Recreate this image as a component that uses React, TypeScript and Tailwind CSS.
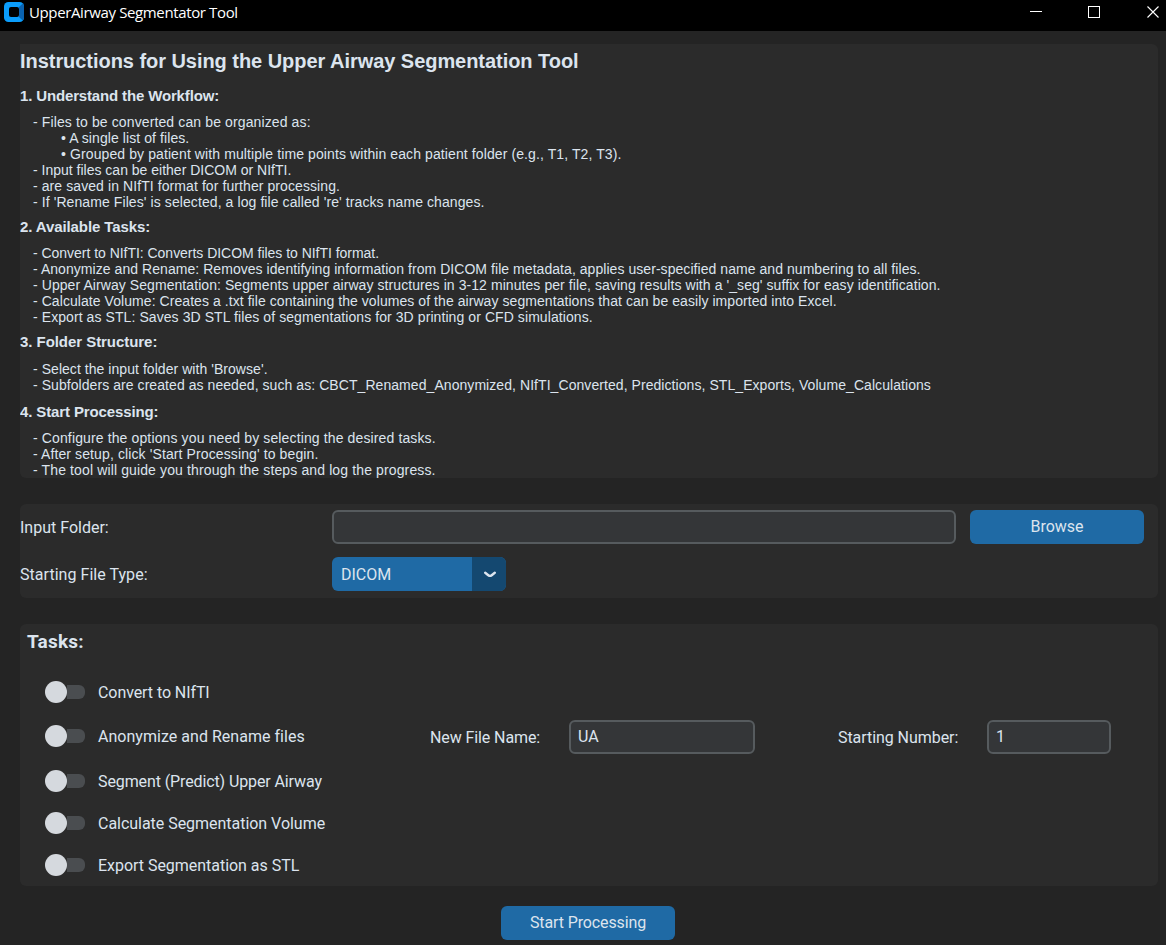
import React from "react";

type Line = { text: string; cls: string };
type Section = { title: string; titleCls: string; lines: Line[] };

const sections: Section[] = [
  {
    title: "1. Understand the Workflow:",
    titleCls: "h-[35px] pb-0.5 tracking-[-0.15px]",
    lines: [
      { text: "- Files to be converted can be organized as:", cls: "tracking-[0.12px]" },
      { text: "• A single list of files.", cls: "pl-7 tracking-[0.08px]" },
      { text: "• Grouped by patient with multiple time points within each patient folder (e.g., T1, T2, T3).", cls: "pl-7 tracking-[0.1px]" },
      { text: "- Input files can be either DICOM or NIfTI.", cls: "" },
      { text: "- are saved in NIfTI format for further processing.", cls: "tracking-[0.085px]" },
      { text: "- If 'Rename Files' is selected, a log file called 're' tracks name changes.", cls: "tracking-[0.087px]" },
    ],
  },
  {
    title: "2. Available Tasks:",
    titleCls: "h-[35px] pb-0.5 tracking-[-0.1px]",
    lines: [
      { text: "- Convert to NIfTI: Converts DICOM files to NIfTI format.", cls: "tracking-[-0.03px]" },
      { text: "- Anonymize and Rename: Removes identifying information from DICOM file metadata, applies user-specified name and numbering to all files.", cls: "tracking-[0.054px]" },
      { text: "- Upper Airway Segmentation: Segments upper airway structures in 3-12 minutes per file, saving results with a '_seg' suffix for easy identification.", cls: "tracking-[0.072px]" },
      { text: "- Calculate Volume: Creates a .txt file containing the volumes of the airway segmentations that can be easily imported into Excel.", cls: "tracking-[0.064px]" },
      { text: "- Export as STL: Saves 3D STL files of segmentations for 3D printing or CFD simulations.", cls: "tracking-[0.08px]" },
    ],
  },
  {
    title: "3. Folder Structure:",
    titleCls: "h-9 pb-0.5 tracking-[-0.05px]",
    lines: [
      { text: "- Select the input folder with 'Browse'.", cls: "tracking-[0.05px]" },
      { text: "- Subfolders are created as needed, such as: CBCT_Renamed_Anonymized, NIfTI_Converted, Predictions, STL_Exports, Volume_Calculations", cls: "tracking-[0.064px]" },
    ],
  },
  {
    title: "4. Start Processing:",
    titleCls: "h-[37px] tracking-[-0.12px]",
    lines: [
      { text: "- Configure the options you need by selecting the desired tasks.", cls: "tracking-[0.128px]" },
      { text: "- After setup, click 'Start Processing' to begin.", cls: "tracking-[0.11px]" },
      { text: "- The tool will guide you through the steps and log the progress.", cls: "tracking-[0.127px]" },
    ],
  },
];

function TitleBar() {
  return (
    <header className="flex h-[31px] shrink-0 items-start justify-between bg-black text-white">
      <div className="flex items-start gap-[5px] pl-1 pt-[2px]">
        <svg width="20" height="20" viewBox="0 0 20 20">
          <rect width="20" height="20" rx="4.500" fill="#0b9dfb" />
          <path d="M15 5L18.800 1.500Q20 2.800 20 4.500V15.500Q20 17.200 18.800 18.500L15 15Z" fill="#0a62b0" />
          <rect x="5" y="5" width="10" height="10" rx="2" fill="#000" />
        </svg>
        <span className="font-['Open_Sans','Noto_Sans',sans-serif] text-[15px] leading-5 tracking-[-0.37px]">
          UpperAirway Segmentator Tool
        </span>
      </div>
      <svg width="136" height="31" viewBox="0 0 136 31" fill="none" stroke="#fff">
        <path d="M0 11.500H12" />
        <rect x="58.500" y="6.500" width="11" height="11" />
        <path d="M117.500 6.500L128.500 17.500M128.500 6.500L117.500 17.500" strokeWidth="1.100" />
      </svg>
    </header>
  );
}

function Switch({ label, cls, textCls }: { label: string; cls: string; textCls: string }) {
  return (
    <div className={`flex items-center ${cls}`}>
      <span className="flex h-[22px] w-10 items-center">
        <span className="size-[22px] shrink-0 rounded-full bg-[#d5d9de]" />
        <span className="-ml-[11px] h-3.5 w-[29px] rounded-r-[6px] bg-[#4a4d50] [clip-path:inset(0_0_0_11px)]" />
      </span>
      <span className={`ml-[13px] whitespace-nowrap pt-0.5 ${textCls}`}>{label}</span>
    </div>
  );
}

export default function App() {
  return (
    <div className="flex h-[945px] w-[1166px] flex-col overflow-hidden bg-[#242424] font-['Roboto',sans-serif] text-base leading-5 text-[#dce4ee]">
      <TitleBar />
      <main className="flex flex-col pl-5 pr-2 pt-[13px]">
        <section className="h-[434px] overflow-hidden whitespace-nowrap rounded-md rounded-tl-none bg-[#2b2b2b] font-['Liberation_Sans',sans-serif] text-[14px] leading-4">
          <h1 className="flex h-[35px] items-center pb-0.5 text-[20px] font-bold tracking-[-0.045px]">
            Instructions for Using the Upper Airway Segmentation Tool
          </h1>
          {sections.map((s) => (
            <div key={s.title}>
              <h2 className={`flex items-center text-[15px] font-bold ${s.titleCls}`}>{s.title}</h2>
              <ul className="pl-[13px]">
                {s.lines.map((l) => (
                  <li key={l.text} className={l.cls}>
                    {l.text}
                  </li>
                ))}
              </ul>
            </div>
          ))}
        </section>

        <section className="mt-[26px] flex h-[94px] flex-col gap-[13px] rounded-md bg-[#2b2b2b] pt-1.5">
          <div className="flex h-[34px] items-center">
            <label className="w-[312px] pt-0.5">Input Folder:</label>
            <div className="h-[34px] w-[624px] rounded-md border-2 border-[#565b5e] bg-[#343638]" />
            <button className="ml-3.5 h-[34px] w-[174px] rounded-md bg-[#1f6aa5]">Browse</button>
          </div>
          <div className="flex h-[34px] items-center">
            <label className="w-[312px] pt-0.5 tracking-[0.04px]">Starting File Type:</label>
            <div className="flex h-[34px] w-[174px] overflow-hidden rounded-md bg-[#1f6aa5]">
              <span className="flex w-[140px] items-center pl-[9px] pt-0.5">DICOM</span>
              <span className="flex flex-1 items-center justify-center bg-[#144870] pl-0.5 pt-px">
                <svg width="12" height="7" viewBox="0 0 12 7" fill="none" stroke="#dce4ee" strokeWidth="2.400" strokeLinecap="round" strokeLinejoin="round">
                  <path d="M1.200 1.700L4.300 4.200Q6 5.400 7.700 4.200L10.800 1.700" />
                </svg>
              </span>
            </div>
          </div>
        </section>

        <section className="mt-[26px] h-[262px] rounded-md bg-[#2b2b2b] pt-[5px]">
          <h2 className="h-[26px] pl-[7px] text-[19px] font-bold leading-[26px] tracking-[0.2px]">Tasks:</h2>
          <div className="flex flex-col pl-[25px] pt-[15px]">
            <Switch label="Convert to NIfTI" cls="h-11" textCls="tracking-[-0.08px]" />
            <div className="flex h-11 items-center">
              <Switch label="Anonymize and Rename files" cls="w-[385px]" textCls="tracking-[0.03px]" />
              <label className="w-[139px] pt-1 tracking-[-0.1px]">New File Name:</label>
              <div className="mt-0.5 flex h-[34px] w-[186px] items-center rounded-md border-2 border-[#565b5e] bg-[#343638] pl-[7px]">
                UA
              </div>
              <label className="ml-[83px] w-[149px] pt-1 tracking-[-0.06px]">Starting Number:</label>
              <div className="mt-0.5 flex h-[34px] w-[124px] items-center rounded-md border-2 border-[#565b5e] bg-[#343638] pl-[7px]">
                1
              </div>
            </div>
            <Switch label="Segment (Predict) Upper Airway" cls="h-[46px]" textCls="tracking-[-0.11px]" />
            <Switch label="Calculate Segmentation Volume" cls="h-[38px]" textCls="tracking-[-0.03px]" />
            <Switch label="Export Segmentation as STL" cls="h-[46px]" textCls="tracking-[-0.03px]" />
          </div>
        </section>
      </main>
      <footer className="flex pl-[501px] pt-5">
        <button className="h-[34px] w-[174px] rounded-md bg-[#1f6aa5] tracking-[-0.12px]">Start Processing</button>
      </footer>
    </div>
  );
}
